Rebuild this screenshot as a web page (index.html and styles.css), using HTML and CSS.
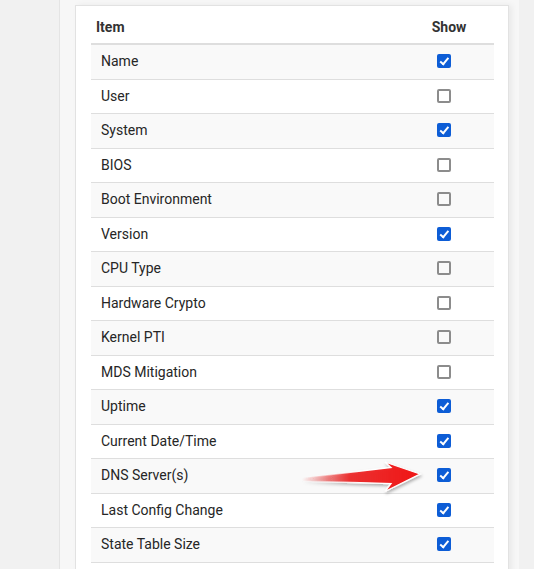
FILE: index.html
```html
<!DOCTYPE html>
<html>
<head>
<meta charset="utf-8">
<link rel="stylesheet" href="styles.css">
</head>
<body>
<div class="page">
  <div class="panel">
    <div class="card">
      <table class="items">
        <thead>
          <tr><th class="c-item">Item</th><th class="c-show">Show</th></tr>
        </thead>
        <tbody>
          <tr><td>Name</td><td class="c-show"><span class="cb on"></span></td></tr>
          <tr><td>User</td><td class="c-show"><span class="cb"></span></td></tr>
          <tr><td>System</td><td class="c-show"><span class="cb on"></span></td></tr>
          <tr><td>BIOS</td><td class="c-show"><span class="cb"></span></td></tr>
          <tr><td>Boot Environment</td><td class="c-show"><span class="cb"></span></td></tr>
          <tr><td>Version</td><td class="c-show"><span class="cb on"></span></td></tr>
          <tr><td>CPU Type</td><td class="c-show"><span class="cb"></span></td></tr>
          <tr><td>Hardware Crypto</td><td class="c-show"><span class="cb"></span></td></tr>
          <tr><td>Kernel PTI</td><td class="c-show"><span class="cb"></span></td></tr>
          <tr><td>MDS Mitigation</td><td class="c-show"><span class="cb"></span></td></tr>
          <tr><td>Uptime</td><td class="c-show"><span class="cb on"></span></td></tr>
          <tr><td>Current Date/Time</td><td class="c-show"><span class="cb on"></span></td></tr>
          <tr><td>DNS Server(s)</td><td class="c-show"><span class="cb on"></span></td></tr>
          <tr><td>Last Config Change</td><td class="c-show"><span class="cb on"></span></td></tr>
          <tr><td>State Table Size</td><td class="c-show"><span class="cb on"></span></td></tr>
          <tr><td>&nbsp;</td><td class="c-show"></td></tr>
        </tbody>
      </table>
    </div>
  </div>
</div>
<svg class="arrow" width="130" height="40" viewBox="0 0 130 40">
  <defs>
    <linearGradient id="fade" x1="0" y1="0" x2="1" y2="0">
      <stop offset="0" stop-color="#ee1b1b" stop-opacity="0"/>
      <stop offset="0.4" stop-color="#ee1b1b" stop-opacity="0.85"/>
      <stop offset="1" stop-color="#f01515"/>
    </linearGradient>
    <linearGradient id="edge" x1="0" y1="0" x2="1" y2="0">
      <stop offset="0" stop-color="#ffffff" stop-opacity="0"/>
      <stop offset="0.5" stop-color="#ffffff" stop-opacity="1"/>
    </linearGradient>
    <filter id="sh" x="-10%" y="-30%" width="130%" height="160%">
      <feDropShadow dx="1" dy="2" stdDeviation="1.5" flood-color="#000" flood-opacity="0.3"/>
    </filter>
  </defs>
  <polygon filter="url(#sh)" fill="url(#fade)" stroke="url(#edge)" stroke-width="1.3" stroke-linejoin="miter"
    points="2,18 91,7.5 85,2 120,14 85,31.5 91,23.5 2,21"/>
</svg>
</body>
</html>
```
FILE: styles.css
```css
html, body {
  margin: 0;
  padding: 0;
}
body {
  background: #f1f1f1;
  font-family: Roboto, "Liberation Sans", Arial, sans-serif;
  color: #222;
  width: 534px;
  height: 569px;
  overflow: hidden;
  position: relative;
}
.page {
  padding-left: 59px;
  height: 569px;
}
.panel {
  border-left: 1px solid #e4e4e4;
  background: #f7f7f7;
  padding: 5px 0 0 15px;
  height: 580px;
  width: 460px;
  box-sizing: border-box;
  display: flex;
}
.card {
  width: 434px;
  box-sizing: border-box;
  background: #fff;
  border: 1px solid #e2e2e2;
  border-bottom: none;
  padding: 6px 14px 0 15px;
  box-shadow: 3px 0 6px rgba(0, 0, 0, 0.06);
}
.items {
  width: 100%;
  border-collapse: collapse;
  font-size: 14px;
}
.items th {
  font-weight: bold;
  text-align: left;
  padding: 5.5px 5px 6px;
  line-height: 19.5px;
  color: #333;
  border-bottom: 2px solid #dedede;
}
.items th.c-show {
  text-align: center;
  width: 90px;
  padding: 5.5px 0 6px;
}
.items td {
  padding: 7px 10px;
  line-height: 19.5px;
  border-top: 1px solid #dedede;
  color: #262626;
}
.items td.c-show {
  text-align: center;
  padding: 7px 10px 7px 0;
}
.items thead + tbody tr:first-child td {
  border-top: none;
}
.items tbody tr:nth-child(odd) td {
  background: #f9f9f9;
}
.cb {
  display: inline-block;
  width: 14px;
  height: 14px;
  box-sizing: border-box;
  border: 2px solid #8c8c8c;
  border-radius: 2px;
  vertical-align: -2px;
  position: relative;
}
.cb.on {
  border: none;
  background: #0d5dd6;
  border-radius: 2px;
}
.cb.on::after {
  content: "";
  position: absolute;
  left: 5px;
  top: 2px;
  width: 3px;
  height: 6.5px;
  border: solid #fff;
  border-width: 0 2px 2px 0;
  transform: rotate(40deg);
}
.arrow {
  position: absolute;
  left: 300px;
  top: 460px;
}
```
